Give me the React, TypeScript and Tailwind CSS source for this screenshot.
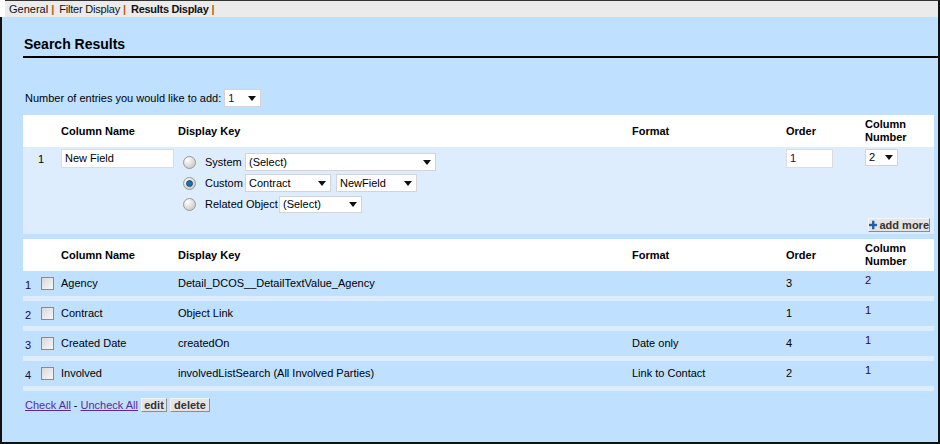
import * as React from 'react';

const cols = 'grid grid-cols-[38px_117px_454px_154px_79px_69px]';

const rows = [
  { n: '1', name: 'Agency', key: 'Detail_DCOS__DetailTextValue_Agency', format: '', order: '3', col: '2' },
  { n: '2', name: 'Contract', key: 'Object Link', format: '', order: '1', col: '1' },
  { n: '3', name: 'Created Date', key: 'createdOn', format: 'Date only', order: '4', col: '1' },
  { n: '4', name: 'Involved', key: 'involvedListSearch (All Involved Parties)', format: 'Link to Contact', order: '2', col: '1' },
];

function Arrow() {
  return (
    <svg width="8" height="5" viewBox="0 0 8 5" className="shrink-0">
      <polygon points="0,0 8,0 4,5" fill="#111" />
    </svg>
  );
}

function Select({ value, className }: { value: string; className: string }) {
  return (
    <div className={`flex items-center justify-between bg-white border border-[#d4d4d4] pl-[3px] pr-[4px] ${className}`}>
      <span>{value}</span>
      <Arrow />
    </div>
  );
}

function Radio({ checked }: { checked?: boolean }) {
  return (
    <svg width="13" height="13" viewBox="0 0 13 13" className="shrink-0">
      <defs>
        <radialGradient id={checked ? 'rg1' : 'rg0'} cx="0.35" cy="0.3" r="0.8">
          <stop offset="0" stopColor="#ffffff" />
          <stop offset="1" stopColor="#c4c4c4" />
        </radialGradient>
      </defs>
      <circle cx="6.5" cy="6.5" r="6" fill={`url(#${checked ? 'rg1' : 'rg0'})`} stroke="#9a9a9a" />
      {checked && <circle cx="6.5" cy="6.5" r="3" fill="#1f6fae" stroke="#0d3d66" strokeWidth="0.8" />}
    </svg>
  );
}

function Checkbox() {
  return (
    <div className="w-[13px] h-[13px] border border-[#8a8a8a] bg-gradient-to-br from-[#d8d8d8] to-[#f8f8f8] shrink-0" />
  );
}

function Header() {
  return (
    <div className={`${cols} h-[32px] bg-white items-center font-bold leading-[13px]`}>
      <div />
      <div>Column Name</div>
      <div>Display Key</div>
      <div>Format</div>
      <div>Order</div>
      <div>
        Column
        <br />
        Number
      </div>
    </div>
  );
}

const btn =
  'h-[14px] flex items-center justify-center bg-[#e4e4e4] border border-t-[#f4f4f4] border-l-[#f4f4f4] border-r-[#8c8c8c] border-b-[#8c8c8c] font-bold text-[#333] leading-none whitespace-nowrap';

export default function App() {
  return (
    <div className="w-[940px] h-[444px] bg-white text-[11px] text-black font-['Liberation_Sans',Arial,sans-serif] leading-[13px]">
      <div className="h-[17px] ml-[5px] bg-[#ebebeb] border-r-2 border-t border-[#111] border-t-[#333] flex items-center pl-[4px] text-[11px] text-[#111]">
        <span>General</span>
        <span className="ml-[3px] text-[#b85c1a] font-bold">|</span>
        <span className="ml-[5px] tracking-[-0.2px]">Filter Display</span>
        <span className="ml-[3px] text-[#b85c1a] font-bold">|</span>
        <span className="ml-[5px] font-bold tracking-[-0.3px]">Results Display</span>
        <span className="ml-[3px] text-[#b85c1a] font-bold">|</span>
      </div>

      <div className="h-[427px] bg-[#bfe0ff] border-l-2 border-r-2 border-b-2 border-[#111] pl-[21px] pr-[4px]">
        <div className="pt-[19px] pb-[3px] border-b-2 border-black -mr-[4px] pl-[1px] text-[14px] leading-[17px] font-bold">
          Search Results
        </div>

        <div className="mt-[31px] h-[18px] flex items-center pl-[2px]">
          <span>Number of entries you would like to add:</span>
          <Select value="1" className="ml-[3px] w-[37px] h-[18px] text-[#2a0a40]" />
        </div>

        <div className="mt-[8px]">
          <Header />
          <div className="bg-[#deedfe] h-[87px]">
            <div className={`${cols} pt-[2px]`}>
              <div className="pl-[15px] pt-[4px]">1</div>
              <div>
                <div className="w-[113px] h-[19px] bg-white border border-[#dcdcdc] pl-[3px] flex items-center">
                  New Field
                </div>
              </div>
              <div className="pl-[5px] pt-[4px] flex flex-col gap-[3px]">
                <div className="flex items-center h-[18px]">
                  <Radio />
                  <span className="ml-[9px] w-[40px]">System</span>
                  <Select value="(Select)" className="w-[191px] h-[18px]" />
                </div>
                <div className="flex items-center h-[18px]">
                  <Radio checked />
                  <span className="ml-[9px] w-[40px]">Custom</span>
                  <Select value="Contract" className="w-[86px] h-[18px]" />
                  <Select value="NewField" className="ml-[5px] w-[81px] h-[18px]" />
                </div>
                <div className="flex items-center h-[18px]">
                  <Radio />
                  <span className="ml-[9px] w-[74px]">Related Object</span>
                  <Select value="(Select)" className="w-[83px] h-[17px]" />
                </div>
              </div>
              <div />
              <div>
                <div className="w-[47px] h-[19px] bg-white border border-[#dcdcdc] pl-[3px] flex items-center text-[#2a0a40]">
                  1
                </div>
              </div>
              <div>
                <Select value="2" className="w-[33px] h-[17px]" />
              </div>
            </div>
            <div className="flex justify-end pr-[4px] mt-[5px]">
              <button className={`${btn} w-[62px] gap-[2px]`}>
                <svg width="10" height="10" viewBox="0 0 10 10">
                  <rect x="3.6" y="0" width="2.8" height="10" fill="#1d5fa8" />
                  <rect x="0" y="3.6" width="10" height="2.8" fill="#1d5fa8" />
                </svg>
                add more
              </button>
            </div>
          </div>
        </div>

        <div className="mt-[5px]">
          <Header />
          {rows.map((r) => (
            <div key={r.n} className={`${cols} h-[30px] bg-[#bfe0ff] border-b-[5px] border-[#deedfe] items-center`}>
              <div className="flex items-center">
                <span className="w-[18px] pl-[2px] mt-[3px] text-[#1a0a3a]">{r.n}</span>
                <Checkbox />
              </div>
              <div>{r.name}</div>
              <div>{r.key}</div>
              <div>{r.format}</div>
              <div>{r.order}</div>
              <div className="self-start pt-[3px] text-[#2a0a40]">{r.col}</div>
            </div>
          ))}
        </div>

        <div className="mt-[7px] h-[14px] flex items-center pl-[2px]">
          <a href="#" className="text-[#5a2a9a] underline">Check All</a>
          <span className="mx-[3px]">-</span>
          <a href="#" className="text-[#5a2a9a] underline">Uncheck All</a>
          <button className={`${btn} ml-[3px] w-[26px]`}>edit</button>
          <button className={`${btn} ml-[3px] w-[40px]`}>delete</button>
        </div>
      </div>
    </div>
  );
}
